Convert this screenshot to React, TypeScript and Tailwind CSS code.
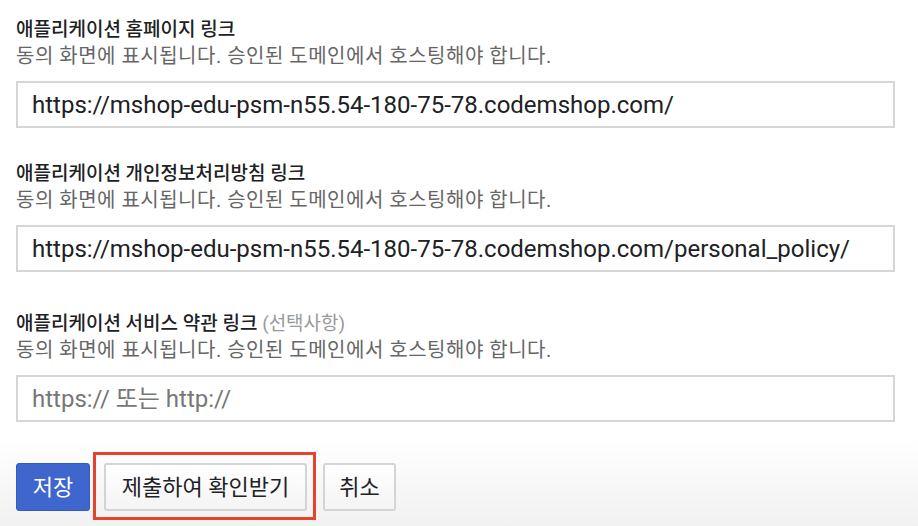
const font = "font-['Roboto','Noto_Sans_CJK_KR',sans-serif]"

type FieldProps = {
  label: string
  optional?: string
  value?: string
  placeholder?: string
  className?: string
}

function Field({ label, optional, value, placeholder, className }: FieldProps) {
  return (
    <div className={className}>
      <div className="text-[19px] leading-[27px] font-medium text-[#202124]">
        {label}
        {optional && <span className="font-normal text-[#9a9a9a]"> {optional}</span>}
      </div>
      <div className="text-[20px] leading-[27px] tracking-[0.5px] text-[#666666]">
        동의 화면에 표시됩니다. 승인된 도메인에서 호스팅해야 합니다.
      </div>
      <div className="mt-[11px] h-[47px] w-[879px] border-2 border-[#d6d6d6] bg-white flex items-center pl-[14px]">
        {value ? (
          <span className="text-[24px] text-[#202124]">{value}</span>
        ) : (
          <span className="text-[24px] text-[#777777]">{placeholder}</span>
        )}
      </div>
    </div>
  )
}

export default function App() {
  return (
    <div className={`${font} w-[918px] h-[526px] bg-white overflow-hidden flex flex-col`}>
      <div className="px-4 pt-[16px]">
        <Field label="애플리케이션 홈페이지 링크" value="https://mshop-edu-psm-n55.54-180-75-78.codemshop.com/" />
        <Field
          className="mt-[32px]"
          label="애플리케이션 개인정보처리방침 링크"
          value="https://mshop-edu-psm-n55.54-180-75-78.codemshop.com/personal_policy/"
        />
        <Field
          className="mt-[38px]"
          label="애플리케이션 서비스 약관 링크"
          optional="(선택사항)"
          placeholder="https:// 또는 http://"
        />
      </div>
      <div className="flex-1 mt-[17px] pt-[24px] px-4 bg-gradient-to-b from-white to-[#f1f1f1]">
        <div className="flex items-center">
          <button className="h-[48px] w-[74px] rounded-[3px] border border-[#3559bd] bg-[#3f66cc] text-white text-[22px]">
            저장
          </button>
          <div className="relative ml-[14px]">
            <div className="absolute left-[-11px] right-[-9px] top-[-11px] bottom-[-9px] border-[3px] border-[#e5442b]" />
            <button className="relative h-[48px] w-[203px] rounded-[3px] border-2 border-[#d4d4d4] bg-gradient-to-b from-white to-[#f4f4f4] text-[22px] text-[#202124]">
              제출하여 확인받기
            </button>
          </div>
          <button className="ml-[16px] h-[48px] w-[73px] rounded-[3px] border-2 border-[#d4d4d4] bg-gradient-to-b from-white to-[#f4f4f4] text-[22px] text-[#202124]">
            취소
          </button>
        </div>
      </div>
    </div>
  )
}
